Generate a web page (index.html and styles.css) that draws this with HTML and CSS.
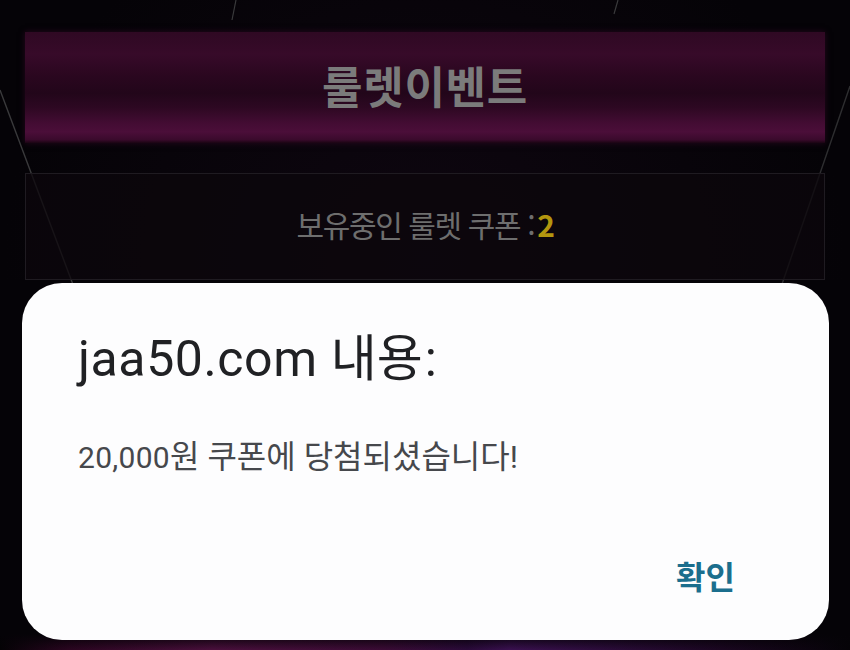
FILE: index.html
```html
<!DOCTYPE html>
<html lang="ko">
<head>
<meta charset="utf-8">
<title>룰렛이벤트</title>
<link rel="stylesheet" href="styles.css">
</head>
<body>
<div class="page">
  <svg class="bg-lines" width="850" height="650" viewBox="0 0 850 650" aria-hidden="true">
    <line x1="0" y1="90" x2="75" y2="290" stroke="#3a3a3c" stroke-width="1.4"/>
    <line x1="850" y1="86" x2="780" y2="290" stroke="#2e2e30" stroke-width="1.4"/>
    <line x1="236" y1="0" x2="232" y2="20" stroke="#3a3a3c" stroke-width="1.2"/>
    <line x1="618" y1="0" x2="614" y2="14" stroke="#3a3a3c" stroke-width="1.2"/>
  </svg>
  <div class="banner"><span class="banner-title">룰렛이벤트</span></div>
  <div class="coupon-box">
    <span class="coupon-label">보유중인 룰렛 쿠폰 :<b class="coupon-count">2</b></span>
  </div>
  <div class="stage"></div>
</div>
<div class="dialog">
  <div class="dialog-title">jaa50.com <span class="ko">내용</span>:</div>
  <div class="dialog-msg"><span class="num">20,000</span>원 쿠폰에 당첨되셨습니다!</div>
  <div class="dialog-actions"><span class="dialog-btn">확인</span></div>
</div>
</body>
</html>
```
FILE: styles.css
```css
html, body {
  margin: 0;
  padding: 0;
}
body {
  width: 850px;
  height: 650px;
  overflow: hidden;
  background: #050307;
  font-family: "Noto Sans CJK KR", "Noto Sans", sans-serif;
  position: relative;
}
.page {
  position: relative;
  height: 650px;
  padding: 32px 25px 0;
  box-sizing: border-box;
  display: flex;
  flex-direction: column;
  background: radial-gradient(ellipse at 50% 40%, #0e0610 0%, #050307 70%);
}
.bg-lines {
  position: absolute;
  left: 0;
  top: 0;
  z-index: 0;
}
.banner {
  position: relative;
  z-index: 1;
  height: 111px;
  display: flex;
  align-items: center;
  justify-content: center;
  background: linear-gradient(180deg,
    #2f0923 0%, #370a29 20%, #2a071f 40%, #22061a 55%,
    #2d0822 68%, #430c33 82%, #4b0e39 90%, #3a0a2c 97%, #1a0512 100%);
  box-shadow: 0 0 6px rgba(60, 10, 45, 0.6);
}
.banner-title {
  font-size: 44px;
  font-weight: 700;
  color: #7b7b7b;
  letter-spacing: 0.7px;
  line-height: 1;
  margin-top: -6px;
}
.coupon-box {
  position: relative;
  z-index: 1;
  margin-top: 30px;
  height: 107px;
  box-sizing: border-box;
  border: 1px solid #1f1b21;
  background: rgba(12, 7, 12, 0.75);
  display: flex;
  align-items: center;
  justify-content: center;
}
.coupon-label {
  font-size: 30px;
  color: #6e6e6e;
  letter-spacing: -1.4px;
  line-height: 1;
  margin-top: -6px;
}
.coupon-count {
  color: #b3960f;
  font-weight: 700;
  margin-left: 3px;
}
.stage {
  flex: 1;
  margin: 0 -25px;
  background:
    linear-gradient(180deg, #050307 0, #050307 calc(100% - 16px), rgba(5, 3, 7, 0) 100%),
    linear-gradient(90deg, #040205 0%, #2a0520 8%, #4a0f3c 25%, #3b0b35 45%, #2a0a3a 55%, #3a1050 60%, #1a0620 85%, #050307 100%);
}
.dialog {
  position: absolute;
  left: 22px;
  top: 283px;
  width: 807px;
  height: 357px;
  box-sizing: border-box;
  background: #fdfdfe;
  border-radius: 40px;
  padding: 46px 94px 0 56px;
  display: flex;
  flex-direction: column;
  z-index: 5;
}
.dialog-title {
  font-family: Roboto, "Noto Sans CJK KR", sans-serif;
  font-size: 50px;
  line-height: 60px;
  color: #202124;
  letter-spacing: 0.6px;
}
.dialog-title .ko {
  letter-spacing: 0;
  margin-right: 2px;
}
.dialog-msg {
  font-family: Roboto, "Noto Sans CJK KR", sans-serif;
  font-size: 32px;
  line-height: 40px;
  color: #46484c;
  margin-top: 48px;
  letter-spacing: 0;
}
.dialog-msg .num {
  font-size: 30px;
  letter-spacing: 0.3px;
}
.dialog-actions {
  display: flex;
  justify-content: flex-end;
  margin-top: 78px;
}
.dialog-btn {
  font-size: 32px;
  font-weight: 700;
  color: #1b6e8d;
  line-height: 38px;
}
```
